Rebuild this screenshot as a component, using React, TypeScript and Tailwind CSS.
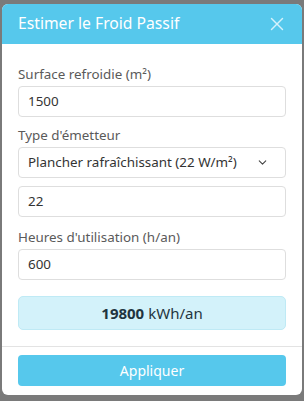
import { ChevronDown, X } from "lucide-react";

const font = { fontFamily: '"Noto Sans", "Open Sans", sans-serif' };

function Label({ children }: { children: string }) {
  return <label className="mb-[2px] text-[13.4px] leading-[20px] text-[#5a5a5a]">{children}</label>;
}

function Input({ value }: { value: string }) {
  return (
    <div className="flex h-[31px] items-center rounded-[4px] border border-[#dedede] px-[9px] text-[13.4px] text-[#333]">
      {value}
    </div>
  );
}

export default function App() {
  return (
    <div className="h-[401px] w-[304px] bg-[#7a7a7a] px-[2px] pt-[4px]" style={font}>
      <div className="flex h-[391px] flex-col overflow-hidden rounded-[6px] bg-white">
        {/* header */}
        <div className="flex h-[40px] shrink-0 items-center justify-between bg-[#56c8ec] pl-[16px] pr-[14px]">
          <span className="text-[15.7px] text-white">Estimer le Froid Passif</span>
          <X className="h-[22px] w-[22px] text-[#d5f1fb]" strokeWidth={1.5} />
        </div>

        {/* body */}
        <div className="flex flex-col px-[16px] pt-[20px]">
          <div className="flex flex-col">
            <Label>Surface refroidie (m²)</Label>
            <Input value="1500" />
          </div>

          <div className="mt-[8px] flex flex-col">
            <Label>Type d'émetteur</Label>
            <div className="flex h-[31px] items-center justify-between rounded-[4px] border border-[#dedede] pl-[9px] pr-[16px] text-[13.4px] text-[#333]">
              <span>Plancher rafraîchissant (22 W/m²)</span>
              <ChevronDown className="h-[13px] w-[13px] text-[#444]" strokeWidth={2} />
            </div>
          </div>

          <div className="mt-[8px]">
            <Input value="22" />
          </div>

          <div className="mt-[10px] flex flex-col">
            <Label>Heures d'utilisation (h/an)</Label>
            <Input value="600" />
          </div>

          <div className="mt-[16px] flex h-[34px] items-center justify-center rounded-[5px] border border-[#bfeaf5] bg-[#d3f2fa] text-[15px] text-[#1f3540]">
            <span className="font-bold">19800</span>
            <span className="ml-[4px]">kWh/an</span>
          </div>
        </div>

        {/* footer */}
        <div className="mt-[16px] border-t border-[#e3e3e3] px-[16px] pt-[8px]">
          <div className="flex h-[31px] items-center justify-center rounded-[4px] bg-[#56c8ec] text-[14px] text-white">
            Appliquer
          </div>
        </div>
      </div>
    </div>
  );
}
